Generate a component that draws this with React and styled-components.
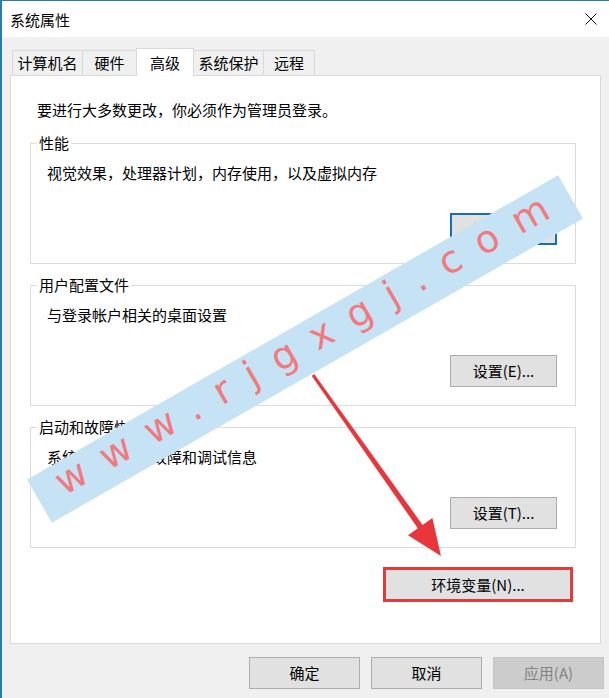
import React from "react";
import styled, { createGlobalStyle } from "styled-components";

const GlobalStyle = createGlobalStyle`
  html, body {
    margin: 0;
    padding: 0;
    background: #fff;
  }
  body {
    font-family: "Noto Sans CJK SC", "Noto Sans", sans-serif;
  }
`;

const Window = styled.div`
  position: relative;
  width: 609px;
  height: 698px;
  box-sizing: border-box;
  border-top: 1px solid #2b7ab0;
  border-left: 2px solid #2b7ab0;
  background: #f0f0f0;
  overflow: hidden;
  display: flex;
  flex-direction: column;
  font-size: 15px;
  color: #000;
`;

const TitleBar = styled.div`
  height: 36px;
  background: #fff;
  display: flex;
  align-items: center;
  justify-content: space-between;
  padding-left: 8px;
`;

const Title = styled.span`
  line-height: 20px;
  padding-top: 2px;
`;

const CloseButton = styled.div`
  width: 36px;
  height: 36px;
  display: flex;
  align-items: center;
  justify-content: center;
`;

const Body = styled.div`
  padding: 11px 8px 0 8px;
`;

const TabRow = styled.div`
  display: flex;
  align-items: flex-end;
  height: 27px;
  padding-left: 2px;
`;

const Tab = styled.div`
  box-sizing: border-box;
  position: relative;
  z-index: ${(p) => (p.$active ? 1 : 0)};
  width: ${(p) => p.$w}px;
  height: ${(p) => (p.$active ? 28 : 25)}px;
  margin-right: -1px;
  margin-bottom: ${(p) => (p.$active ? -1 : 0)}px;
  border: 1px solid #d9d9d9;
  border-bottom: none;
  background: ${(p) => (p.$active ? "#fff" : "#f0f0f0")};
  display: flex;
  align-items: center;
  justify-content: center;
  line-height: 20px;
`;

const Panel = styled.div`
  box-sizing: border-box;
  height: 569px;
  background: #fff;
  border: 1px solid #d9d9d9;
  padding: 24px 24px 0 19px;
  display: flex;
  flex-direction: column;
`;

const Notice = styled.p`
  margin: 0 0 13px 7px;
  line-height: 20px;
`;

const Group = styled.fieldset`
  margin: 0;
  padding: 0;
  min-width: 0;
  border: 1px solid #dcdcdc;

  & + & {
    margin-top: 11px;
  }
`;

const Legend = styled.legend`
  margin-left: 6px;
  padding: 0 2px;
  line-height: 20px;
  font-size: 15px;
`;

const GroupBody = styled.div`
  padding: 10px 18px 18px 16px;
`;

const Desc = styled.div`
  line-height: 20px;
  margin-bottom: 30px;
`;

const ButtonRow = styled.div`
  display: flex;
  justify-content: flex-end;
`;

const Button = styled.button`
  box-sizing: border-box;
  width: ${(p) => p.$w || 107}px;
  height: 32px;
  padding: 0;
  background: #e1e1e1;
  border: ${(p) => (p.$focus ? "2px solid #1470b8" : "1px solid #adadad")};
  font-family: inherit;
  font-size: 15px;
  line-height: 20px;
  color: #000;

  &:disabled {
    background: #cccccc;
    border-color: #c4c4c4;
    color: #838383;
  }
`;

const EnvRow = styled.div`
  display: flex;
  justify-content: flex-end;
  margin-top: 19px;
  padding-right: 3px;
`;

const EnvButton = styled(Button)`
  width: 190px;
  height: 35px;
  border: 3px solid #e53a3a;
`;

const Footer = styled.div`
  display: flex;
  justify-content: flex-end;
  gap: 11px;
  padding: 13px 5px 0 0;
`;

const Band = styled.div`
  position: absolute;
  left: -3px;
  top: 323px;
  width: 612px;
  height: 50px;
  box-sizing: border-box;
  padding-left: 24px;
  transform: rotate(-29.8deg);
  background: #c6e3f5;
  color: #f27a7f;
  font-family: "DejaVu Sans", sans-serif;
  font-size: 38px;
  line-height: 40px;
  letter-spacing: 20px;
  white-space: nowrap;
  z-index: 5;
`;

const ArrowLayer = styled.svg`
  position: absolute;
  left: -2px;
  top: -1px;
  z-index: 6;
  pointer-events: none;
`;

const tabs = [
  { label: "计算机名", w: 71 },
  { label: "硬件", w: 55 },
  { label: "高级", w: 58, active: true },
  { label: "系统保护", w: 71 },
  { label: "远程", w: 52 },
];

const groups = [
  {
    title: "性能",
    desc: "视觉效果，处理器计划，内存使用，以及虚拟内存",
    button: "设置(S)...",
    focus: true,
  },
  { title: "用户配置文件", desc: "与登录帐户相关的桌面设置", button: "设置(E)..." },
  {
    title: "启动和故障恢复",
    desc: "系统启动、系统故障和调试信息",
    button: "设置(T)...",
  },
];

export default function App() {
  return (
    <>
      <GlobalStyle />
      <Window>
        <TitleBar>
          <Title>系统属性</Title>
          <CloseButton>
            <svg width="12" height="12" viewBox="0 0 12 12">
              <path d="M0.5 0.5 L11.5 11.5 M11.5 0.5 L0.5 11.5" stroke="#111" strokeWidth="1" fill="none" />
            </svg>
          </CloseButton>
        </TitleBar>

        <Body>
          <TabRow>
            {tabs.map((t) => (
              <Tab key={t.label} $w={t.w} $active={t.active}>
                {t.label}
              </Tab>
            ))}
          </TabRow>
          <Panel>
            <Notice>要进行大多数更改，你必须作为管理员登录。</Notice>
            {groups.map((g) => (
              <Group key={g.title}>
                <Legend>{g.title}</Legend>
                <GroupBody>
                  <Desc>{g.desc}</Desc>
                  <ButtonRow>
                    <Button $focus={g.focus}>{g.button}</Button>
                  </ButtonRow>
                </GroupBody>
              </Group>
            ))}
            <EnvRow>
              <EnvButton>环境变量(N)...</EnvButton>
            </EnvRow>
          </Panel>
        </Body>

        <Footer>
          <Button $w={111}>确定</Button>
          <Button $w={111}>取消</Button>
          <Button $w={111} disabled>
            应用(A)
          </Button>
        </Footer>

        <Band>www.rjgxgj.com</Band>

        <ArrowLayer width="609" height="698" viewBox="0 0 609 698">
          <polygon
            points="314.2,374.1 422.6,524.9 432.4,517.9 441,556 408,535.3 417.8,528.3 311.8,375.9"
            fill="#e8363b"
          />
        </ArrowLayer>
      </Window>
    </>
  );
}
